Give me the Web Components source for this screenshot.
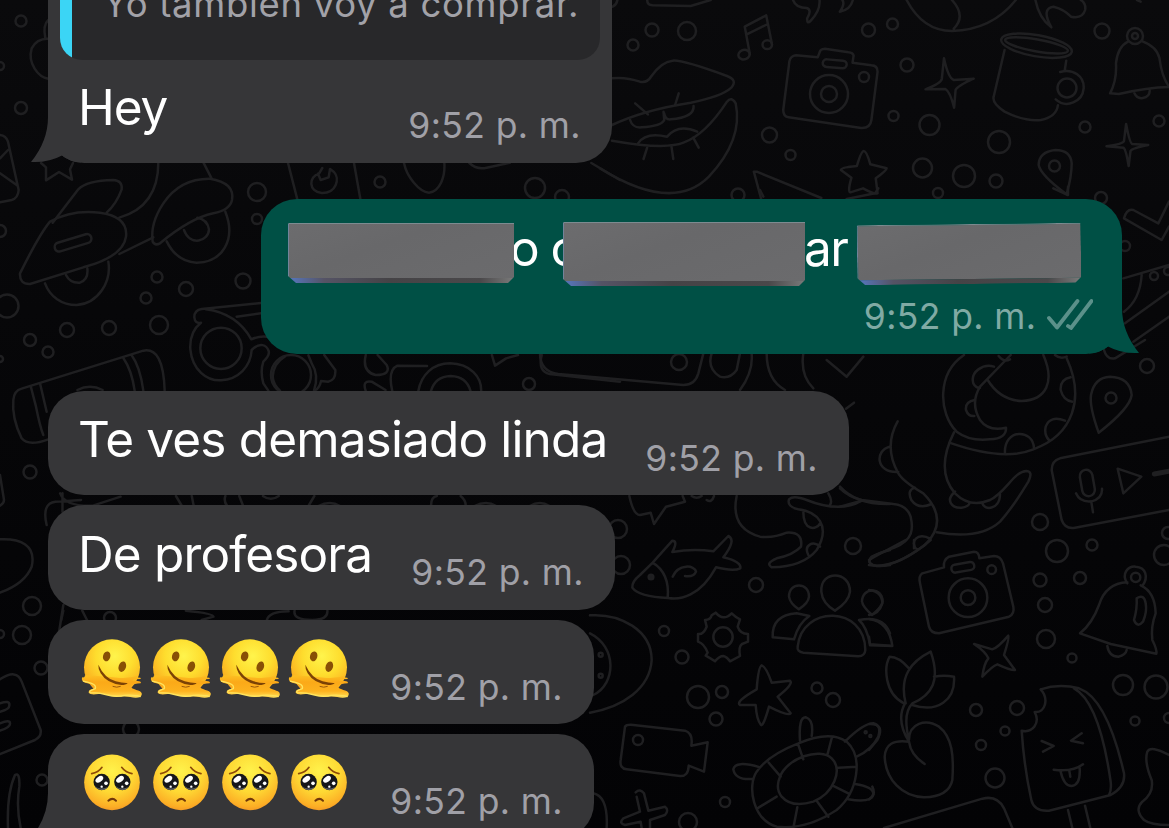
<!DOCTYPE html>
<html lang="es">
<head>
<meta charset="utf-8">
<title>Chat</title>
<style>
  html, body {
    margin: 0;
    height: 100%;
    overflow: hidden;
    background: #050507;
  }
</style>
</head>
<body>
<chat-screen>
  <chat-message tail style="--w: 564px; --h: 162.5px">
    <chat-quote slot="quote">Yo también voy a comprar.</chat-quote>
    <span style="letter-spacing: -1.1px">Hey</span>
    <message-time slot="time">9:52 p. m.</message-time>
  </chat-message>
  <chat-message out tail style="--w: 861px; --h: 155.5px; margin: 26.3px 0">
    <redacted-text>
      <redaction-bar style="--w: 226px; --h: 60px; --y: 5px"></redaction-bar>
      <span class="mid">o c</span>
      <redaction-bar style="--w: 242px; --h: 64px; --y: 4px"></redaction-bar>
      <span class="end">ar</span>
      <redaction-bar style="--w: 224px; --h: 60px; --y: 6px; --tilt: -.7deg"></redaction-bar>
    </redacted-text>
    <message-time slot="time" read>9:52 p. m.</message-time>
  </chat-message>
  <chat-message style="--w: 801px">
    <span>Te ves demasiado linda</span>
    <message-time slot="time">9:52 p. m.</message-time>
  </chat-message>
  <chat-message style="--w: 567px">
    <span>De profesora</span>
    <message-time slot="time">9:52 p. m.</message-time>
  </chat-message>
  <chat-message style="--w: 546px">
    <emoji-row kind="melting" count="4"></emoji-row>
    <message-time slot="time">9:52 p. m.</message-time>
  </chat-message>
  <chat-message tail style="--w: 546px">
    <emoji-row kind="pleading" count="4"></emoji-row>
    <message-time slot="time">9:52 p. m.</message-time>
  </chat-message>
</chat-screen>

<template id="wallpaper">
  <style>
    :host { display: block; }
    svg { display: block; width: 1169px; height: 828px; }
    path, circle, ellipse, rect {
      fill: none;
      stroke: #1f1f21;
      stroke-width: 2.5px;
      stroke-linecap: round;
      stroke-linejoin: round;
      vector-effect: non-scaling-stroke;
    }
  </style>
  <svg viewBox="0 0 1169 828" aria-hidden="true">
    <g id="dots"></g>
    <!-- top right: lips, notes, camera, mug, bell -->
    <g transform="scale(.36284 .33333) translate(1653.6 0)">
      <path d="M33 235Q70 230 110 245Q130 250 142 228Q170 185 200 182Q225 178 350 228Q380 240 362 263Q335 290 250 308Q120 330 33 375"/>
      <path d="M33 422Q180 450 230 428Q290 405 350 305Q362 288 374 310Q395 420 300 530Q200 640 0 505"/>
      <path d="M97 310L132 343M217 280L207 315M83 360Q90 385 115 382Q170 378 177 360L175 335M177 340Q180 360 195 358Q260 352 258 318M105 430Q125 395 185 410Q215 370 268 395M130 443L120 477M197 440L202 477M257 413L272 443"/>
      <path d="M413 163L399 80L458 46L474 133M403 104L463 72"/>
      <ellipse cx="397" cy="164" rx="16" ry="14" transform="rotate(-25 397 164)"/>
      <ellipse cx="461" cy="134" rx="13" ry="13"/>
      <path d="M130 0Q130 15 145 16L250 18L305 0M35 20Q46 14 48 0M532 0Q540 24 570 24Q585 30 571 55Q570 74 580 63Q608 32 605 0M668 0Q676 12 661 35Q690 30 697 0M845 0Q890 93 970 93Q1080 90 1146 0M970 0Q1010 48 975 86M1200 0Q1210 55 1244 82Q1215 25 1250 20Q1280 28 1298 50Q1330 57 1337 30Q1340 10 1325 0M1480 0L1490 5"/>
      <path d="M600 172L540 166Q525 168 522 184L505 330Q505 350 520 352L720 384Q745 385 748 360L765 215Q765 197 748 196L696 188L699 167Q697 158 685 157L620 146Q606 147 605 158Z"/>
      <rect x="614" y="180" width="66" height="23" rx="11" transform="rotate(5 647 191)"/>
      <path d="M948 175Q960 235 975 240L1030 236Q985 258 980 270L976 323Q965 275 952 267L897 268Q940 250 942 237Z"/>
      <ellipse cx="1203" cy="137" rx="99" ry="32" transform="rotate(11 1203 137)"/>
      <ellipse cx="1203" cy="136" rx="88" ry="18" transform="rotate(11 1203 136)"/>
      <path d="M1115 150L1085 290Q1080 310 1115 335Q1170 365 1215 360Q1258 350 1262 316M1285 182L1281 210M1268 216C1305 204 1335 230 1333 265C1330 305 1285 327 1256 298"/>
      <path d="M1455 125Q1427 140 1422 190Q1425 240 1406 280L1430 282Q1510 262 1569 261Q1548 230 1542 175Q1535 140 1495 124M1473 280Q1480 297 1496 294Q1515 290 1515 272"/>
      <path d="M1450 372Q1460 430 1467 432L1511 435Q1465 445 1462 453L1457 498Q1450 450 1443 443L1396 439Q1440 432 1444 424Z"/>
      <path d="M1286 583Q1300 530 1300 490Q1297 450 1255 450Q1210 455 1209 495Q1214 525 1286 583Z"/>
      <path d="M727 453Q735 453 745 493L790 505Q790 512 760 535L765 580Q755 583 725 565L690 577Q682 575 693 533L664 510Q664 502 708 498Q720 453 727 453Z"/>
      <path d="M445 600L424 515L432 515L610 594"/>
    </g>
    <!-- top left -->
    <g transform="scale(.33333)">
      <path d="M145 60Q128 75 136 115M145 116Q110 115 95 145C82 190 115 232 145 236"/>
      <path d="M0 405Q18 407 24 425L56 570Q54 595 35 600L0 607M24 450L0 475M0 520L50 555"/>
      <path d="M123 489L138 502L138 541L177 516L216 539L210 508L219 489"/>
      <path d="M864 489L893 602M1062 489L1082 602M967 504L957 521C925 530 925 575 965 579C1010 580 1020 535 1002 516L990 507L986 532L962 540L954 521"/>
      <path d="M1212 489C1220 530 1258 576 1287 578C1320 574 1336 530 1333 489M1408 489Q1430 510 1460 503L1530 488M1774 489L1860 540"/>
    </g>
    <!-- scooter, glasses, cash -->
    <g transform="scale(.33333) translate(0 450)">
      <path d="M60 370Q120 250 150 215Q215 178 300 188Q385 200 378 260Q370 320 250 352L90 402Q58 403 60 370Z"/>
      <path d="M158 218L235 118Q260 92 340 90Q368 92 365 118Q350 160 320 188M475 37Q475 170 358 203M610 37L635 86M358 312L460 262"/>
      <path d="M458 275Q450 220 490 160Q540 85 630 86Q705 98 696 150Q690 180 640 190Q570 205 480 280Q465 288 458 275Z"/>
      <path d="M676 185C710 270 665 338 590 338Q530 335 500 274M552 240C570 290 626 275 627 238Q622 208 592 203M135 400C150 440 185 465 230 465C295 460 335 395 325 335M198 375Q210 400 240 398Q266 388 262 355"/>
      <rect x="162" y="265" width="114" height="27" rx="13" transform="rotate(-17 219 278)"/>
      <path d="M783 459L605 477Q583 480 583 502Q585 522 603 518Q568 545 571 598C577 660 620 693 663 691C715 688 752 650 755 600C780 575 800 585 806 603Q810 615 790 635Q780 665 790 700L805 722M618 478Q710 490 754 568Q775 558 800 560M710 500L783 490"/>
      <circle cx="663" cy="595" r="62"/>
      <path d="M855 619Q820 640 818 680Q820 705 840 722M942 722Q958 675 935 640L925 616"/>
      <path d="M40 750Q42 722 65 716L430 602Q490 590 494 722M370 624Q395 660 404 722M395 616Q420 650 430 722M92 708L108 770Q120 830 130 855M120 700L140 785M232 720Q270 700 308 720M40 750Q35 805 65 865Q85 890 145 868"/>
    </g>
    <!-- strip between the bubbles -->
    <g transform="translate(0 340) scale(.3954 .33333)">
      <path d="M820 45L848 90Q850 120 830 125L812 123Q808 145 795 153M925 45Q915 95 950 105Q990 105 978 75L955 45M925 153Q915 120 940 125L975 150M992 153Q980 90 1005 77L1080 78M1058 153C1065 105 1095 70 1138 70C1190 72 1218 110 1217 153M1090 153Q1100 110 1140 108Q1180 110 1190 153M1244 45L1252 77L1280 55L1310 45M1370 45Q1360 95 1390 102L1568 125"/>
      <path d="M152 460Q165 500 235 497L305 470M118 555Q105 490 140 485L205 480M158 460V515M155 840L160 812M208 812L220 840M445 468L460 498M485 468L490 498M570 468Q565 485 575 498M605 468L615 498M665 468Q685 485 705 468M795 468L780 498M1090 498Q1090 470 1105 468M1165 468Q1178 480 1178 498M470 812Q540 820 540 830L510 840M675 840Q680 815 730 814M745 812Q740 840 790 840Q830 840 828 812"/>
      <path d="M805 498Q835 480 860 498M1200 498Q1230 480 1255 498M1340 498Q1365 480 1390 498"/>
    </g>
    <!-- between sent bubble and the voice note: laptop, snake -->
    <g transform="translate(540 350) scale(.33333)">
      <path d="M0 10Q0 65 55 72L430 105Q465 105 475 70L490 10M515 10Q500 55 540 80Q570 88 590 60L600 10M635 12Q640 65 600 120M680 10Q680 90 735 120M790 10Q780 75 820 115M860 30L920 80L970 20"/>
    </g>
    <g transform="translate(840 340) scale(.33333)">
      <path d="M372 45C290 100 295 220 350 275Q390 305 450 298Q500 295 498 263Q445 275 420 240Q390 190 420 140L512 45M443 120Q480 180 545 183C620 180 645 125 610 45M680 55C735 175 700 285 580 328Q490 365 328 308M342 277Q285 390 345 460Q390 505 450 480C500 455 520 395 560 393Q580 395 565 425Q520 500 480 545Q420 600 290 577"/>
      <path d="M462 80C430 70 390 95 400 130Q408 145 420 143M404 180Q375 185 378 210Q385 230 403 228M692 112Q660 118 662 150Q670 182 697 185M675 242Q630 225 617 260Q612 285 627 300M495 340C490 265 580 265 582 325M476 48Q492 68 510 58M645 45Q660 58 680 50M345 455C315 480 335 505 365 503Q387 500 389 488M427 488C430 512 480 512 480 462"/>
      <path d="M173 244Q130 320 175 400Q190 425 250 460Q330 540 255 615Q165 680 110 678Q75 670 95 650Q130 635 165 622C220 600 220 565 212 530Q200 495 160 492L65 480Q25 470 0 445M0 500L65 482M149 320C105 330 105 400 175 396M225 443Q200 450 214 480Q235 510 275 492M232 630C205 605 235 575 270 596M18 206L42 188"/>
      <path d="M776 278Q748 200 753 165Q763 112 810 110Q870 112 875 165Q870 205 776 278Z"/>
      <path d="M987 290L660 355Q635 362 635 390L665 540Q675 568 705 563L987 510M833 386L904 410L850 460Z"/>
      <rect x="723" y="389" width="38" height="80" rx="19" transform="rotate(-10 742 429)"/>
      <path d="M708 460Q720 488 755 484Q788 475 786 446M754 486L759 517"/>
      <path d="M943 402L987 394" style="stroke-width: 5px"/>
      <path d="M792 30Q800 60 825 55L915 0"/>
    </g>
    <g transform="translate(700 190) scale(.33333)">
      <path d="M1407 35L1375 100L1300 60Q1280 55 1272 85L1385 150L1407 110M1270 265L1407 225M1325 255Q1320 330 1272 365M1275 400L1407 305M1300 455L1407 380M440 27L525 10L535 -5M1060 -5L1104 15V-10M180 0L190 20"/>
    </g>
    <!-- fish, gear, people, starfish, turtle, camcorder -->
    <g transform="translate(590 480) scale(.33333)">
      <path d="M118 48Q130 105 150 105L182 98L192 132L228 80L285 65L278 48M305 48Q320 58 335 48M350 60Q365 70 372 48M440 48Q420 145 510 170Q550 175 590 158Q640 155 633 200Q610 225 560 235Q525 250 545 262Q640 260 680 210C725 135 680 95 625 88Q590 80 597 58Q610 45 650 60Q750 100 815 62M715 40Q730 65 718 78M750 20Q800 75 900 72M640 95C640 155 680 150 690 130M655 225C640 195 670 180 690 200M900 210Q840 225 838 245Q845 265 900 255"/>
      <path d="M247 216Q310 205 370 214L415 168Q440 180 400 232Q455 245 451 265Q430 275 378 262C330 350 270 360 235 354Q145 350 127 323Q125 305 150 285L188 248L247 182Q265 182 247 216M188 248Q240 280 233 354M248 290C265 250 315 255 318 275Q310 292 285 288"/>
      <circle cx="183" cy="291" r="7" style="fill:#1f1f21"/>
      <path d="M377 398L365 406Q362 420 345 420L350 440Q340 465 324 462V485Q342 490 353 518L347 527Q360 534 375 544Q388 528 400 528Q410 530 420 544L450 528Q445 500 456 492L474 485V462Q450 462 443 440L450 418Q435 410 425 400Q400 425 377 398Z"/>
      <circle cx="399" cy="471" r="29"/>
      <path d="M597 350C597 305 657 305 657 350Q655 370 626 388Q600 370 597 350M694 335C690 270 780 270 780 335Q777 365 735 392Q697 370 694 335M816 365C816 320 878 320 878 365Q876 380 846 405Q818 380 816 365M612 478L548 472Q545 405 620 400L658 408Q625 430 612 478ZM623 500C635 375 825 375 826 510Q825 528 805 529L640 518Q620 515 623 500M807 420Q880 405 900 460M807 420Q830 440 840 493L900 497"/>
      <path d="M515 556Q528 560 545 608L600 602Q612 612 563 650L602 700Q595 710 537 680Q520 740 513 735Q500 720 497 675L450 675Q435 665 500 628Q505 560 515 556Z"/>
      <path d="M105 740Q110 733 130 735L285 752Q310 760 304 797L353 787L342 875L296 857Q295 890 270 888L110 868Q88 865 92 840Z"/>
      <path d="M625 790Q720 750 770 785C820 830 805 935 740 990Q650 1050 560 1040C490 1020 470 920 500 875Q535 825 625 790ZM570 890C590 835 690 800 725 835C760 870 730 940 670 965Q605 985 575 950Q555 925 570 890M624 792L640 838M726 771L712 825M536 848L572 890M746 863L800 860M560 950L502 985M622 982L610 1044M682 965L715 1010M730 918L775 940M630 782Q625 710 648 712Q672 720 665 768M765 785Q820 730 850 730Q875 735 865 770Q845 810 800 830M510 862Q435 840 430 868Q435 900 485 897M795 912Q850 920 850 942Q845 970 775 958"/>
      <circle cx="827" cy="757" r="3"/><circle cx="841" cy="768" r="3"/>
      <path d="M0 406C90 400 185 450 185 540C180 625 100 680 0 698M0 460C80 500 80 610 10 645M10 940Q55 950 50 1044M137 937Q150 925 162 940L175 992L225 980Q238 990 225 1005L180 1020V1044M140 950L150 995L100 1015Q85 1030 105 1035L152 1025L155 1044"/>
      <circle cx="32" cy="524" r="6"/><circle cx="32" cy="587" r="6"/>
    </g>
    <!-- bottom right: camera, bell, plant, ice cream -->
    <g transform="translate(869 540) scale(.33333)">
      <path d="M225 82L160 100Q148 108 153 130L180 260Q185 280 210 280L420 230Q437 222 433 200L402 70Q395 48 375 48L331 55Q330 35 315 35L240 50Q222 60 225 82Z"/>
      <rect x="247" y="70" width="69" height="24" rx="11" transform="rotate(-10 281 82)"/>
      <circle cx="297" cy="173" r="58"/><circle cx="297" cy="173" r="22"/><circle cx="368" cy="89" r="13"/>
      <path d="M315 312L370 328Q385 325 418 287Q422 290 405 345L438 390Q430 393 385 373Q370 378 340 410Q345 370 358 355Q350 335 315 312Z"/>
      <path d="M775 127Q710 130 690 195Q670 250 633 280L725 312L862 341Q865 330 850 300Q845 260 860 220Q858 155 815 136M775 130C755 100 778 78 800 80C830 82 840 110 820 138M715 318Q720 350 748 350Q770 345 773 330"/>
      <circle cx="800" cy="112" r="14"/>
      <path d="M803 175Q825 160 830 190Q835 215 822 245Q805 265 795 240Q805 205 803 175Z"/>
      <path d="M105 490C45 460 45 380 62 350Q90 350 120 385M110 490C90 410 125 365 185 335C215 420 190 465 130 490M195 410Q225 405 255 410C260 480 205 520 130 495M108 490Q80 540 120 605Q125 645 167 672M130 490Q100 520 120 600C120 550 170 535 210 560C250 590 255 650 250 720Q240 770 165 772C100 770 50 720 47 650Q50 595 120 605"/>
      <path d="M515 448Q570 430 630 445C700 470 740 590 765 700Q770 740 725 765L540 812Q495 815 487 780Q465 680 458 572C490 580 515 550 497 516C530 520 540 475 515 448M615 445C680 480 710 620 725 725Q728 750 720 765M597 810L610 864M648 797L664 864"/>
      <path d="M518 603L554 618L522 635M638 580L606 602L642 610M554 689Q610 697 642 673M575 695Q585 738 608 738Q635 735 632 685M601 693L604 710"/>
      <path d="M900 645Q845 615 835 635Q825 665 848 720Q855 760 820 785Q795 810 825 840Q845 855 900 855M45 864L340 776Q385 765 405 805L430 864M0 150Q40 155 40 190Q30 222 0 225M0 237Q60 245 70 318L3 316L0 290M0 552Q50 550 25 600L0 630M10 740Q22 765 0 778M0 60Q35 40 110 0M0 75Q80 90 185 0M135 0V25"/>
    </g>
    <!-- left edge -->
    <g transform="translate(0 440) scale(.33333)">
      <path d="M0 105L12 180Q12 190 0 197M0 298C60 295 110 315 95 380Q75 430 0 458M0 718Q50 685 65 725L122 870Q125 890 105 900L0 942M0 790Q30 780 28 795Q30 808 0 815M0 850Q30 838 30 850Q32 862 0 872M24 1164Q20 1060 45 1005Q60 995 58 1040Q48 1100 62 1164M190 495L178 570"/>
    </g>
  </svg>
</template>

<template id="melting">
  <svg viewBox="120 80 207 200">
    <defs>
      <radialGradient id="g" cx=".55" cy=".3" r=".75">
        <stop offset="0" stop-color="#fff44c"/><stop offset=".45" stop-color="#fedd2e"/>
        <stop offset=".85" stop-color="#fbb020"/><stop offset="1" stop-color="#ee9326"/>
      </radialGradient>
      <linearGradient id="p" x2="0" y2="1">
        <stop offset="0" stop-color="#fdc022"/><stop offset=".3" stop-color="#fba918"/>
        <stop offset=".7" stop-color="#fdb21e"/><stop offset="1" stop-color="#ffe05a"/>
      </linearGradient>
    </defs>
    <circle cx="216" cy="174" r="84" fill="url(#g)"/>
    <path d="M135 198Q134 207 128 203Q122 210 130 217C145 226 166 222 163 234C160 242 145 239 146 250Q151 258 175 254C205 252 215 264 245 262C270 260 285 270 302 262Q310 253 300 246C285 238 270 239 274 229Q282 223 302 222Q306 216 292 215L276 213Q281 209 302 209Q304 204 290 205L296 198Q270 208 240 206Q180 200 135 198Z" fill="url(#p)"/>
    <path d="M130 215C152 222 170 223 166 238C152 243 147 245 150 250Q178 250 203 257T253 258Q285 256 300 262" fill="none" stroke="#ffe45d" stroke-width="4" stroke-linecap="round"/>
    <ellipse cx="200" cy="141" rx="11" ry="15" transform="rotate(15 200 141)" fill="#885006"/>
    <ellipse cx="247" cy="172" rx="11" ry="16" transform="rotate(18 247 172)" fill="#885006"/>
    <path d="M175 166Q193 206 227 216Q249 222 263 221Q258 227 244 227Q200 222 182 192Q174 178 175 166Z" fill="#7b4205"/>
    <path d="M218 231Q230 236 242 231" fill="none" stroke="#9b5a0b" stroke-width="3"/>
  </svg>
</template>

<template id="pleading">
  <svg viewBox="120 422 207 200">
    <defs>
      <radialGradient id="g" cx=".5" cy=".3" r=".75">
        <stop offset="0" stop-color="#fff24b"/><stop offset=".5" stop-color="#fed934"/>
        <stop offset=".85" stop-color="#fcae25"/><stop offset="1" stop-color="#ee8e25"/>
      </radialGradient>
    </defs>
    <circle cx="216" cy="516" r="83.5" fill="url(#g)"/>
    <path d="M155 490Q175 487 186 471M245 471Q257 487 276 490" fill="none" stroke="#8d4a08" stroke-width="5" stroke-linecap="round"/>
    <g id="eye">
      <circle cx="185" cy="515" r="24.5" fill="#15161a"/>
      <path d="M165 527Q179 541 203 530Q198 539 185 539Q171 537 165 527Z" fill="#5e6066"/>
      <ellipse cx="178" cy="507" rx="13" ry="8" transform="rotate(-35 178 507)" fill="#fff"/>
      <circle cx="198" cy="519" r="5.5" fill="#fff"/><circle cx="185" cy="529" r="3.5" fill="#fff"/>
    </g>
    <use href="#eye" x="62"/>
    <path d="M205 571Q217 560 228 571" fill="none" stroke="#70370a" stroke-width="6" stroke-linecap="round"/>
  </svg>
</template>

<script>
  // x y r, in page pixels
  const DOTS = `
    652 30 6.5, 633 45 5.5, 687 31 9, 868.5 30 6.5, 892.5 24 5.5, 907 65 6.5, 893.5 116 5,
    929.5 125 10, 769.5 135 7.5, 790.5 155 5, 922.5 168 9.5, 964 176 11, 996 181 6.5, 938 193 5,
    999 142 11, 1085 127 5.5, 1102 31 7.5, 1159 121 5.5, 738 195 6.5, 1101 198 6, 829 94 19,
    829 94 8, 864 77 5, 1067 88 9.5, 1135 36 8, 1135 36 3, 1054.5 166 5.5,
    21 21 5.5, 0 66 4, 21 108 6, 257 192 9, 257 219 5, 0 231 6, 380 182 5.5, 535 188 10, 562 197 7,
    157 277 5.5, 186 289 7, 243 281 7.5, 146 298 5.5, 159 325 9, 109 328 7, 67 330 7, 30 340 6,
    48 352 5.5, 7 306 11.5, 0 359 3, 291 375 20, 529 384 6, 30 472 6.5, 32 606 9, 22 635 9,
    0 634 4, 41 668 6.5, 42 780 5.5, 679 362 8, 1125 246 5, 1154 276 4, 1168 271 4,
    1147 366 7, 1111 398 5.5, 1040 522 8, 1057 551 11, 1092 545 5.5, 853 546 8, 1164 555 10,
    1168 533 6, 618 529 9, 621 565 9, 756 585 7, 664 631 5, 682 657 6.5, 698 697 11, 722 692 6,
    716 719 6.5, 817 688 5.5, 833 700 7, 638 740 5, 725 802 5, 688 822 9, 1040 580 6.5, 1080 578 6,
    1045 605 7, 1046 639 9, 1072 658 4.5, 1123 685 10, 1156 687 11.5, 1135 721 4.5, 1169 718 5,
    976 710 6, 1017 708 7, 1005 731 4.5, 981 745 5, 995 778 9.5, 110 618 6, 131 729 8`;

  const FONT = '"Inter", "Liberation Sans", sans-serif';

  customElements.define('chat-wallpaper', class extends HTMLElement {
    constructor() {
      super();
      const root = this.attachShadow({ mode: 'open' });
      root.append(document.getElementById('wallpaper').content.cloneNode(true));
      root.getElementById('dots').innerHTML = DOTS.split(',').map(d => {
        const [x, y, r] = d.trim().split(' ');
        return `<circle cx="${x}" cy="${y}" r="${r}"/>`;
      }).join('');
    }
  });

  customElements.define('chat-screen', class extends HTMLElement {
    constructor() {
      super();
      this.attachShadow({ mode: 'open' }).innerHTML = `
        <style>
          :host {
            display: block;
            position: relative;
            width: 1169px;
            height: 828px;
            overflow: hidden;
            background: linear-gradient(#0a0a0c, #060608 50%, #030305);
            font-family: ${FONT};
          }
          chat-wallpaper { position: absolute; inset: 0; }
          main {
            position: relative;
            display: flex;
            flex-direction: column;
            align-items: flex-start;
            gap: 10.2px;
            padding: 0 47px 0 48px;
          }
        </style>
        <chat-wallpaper></chat-wallpaper>
        <main><slot></slot></main>
      `;
    }
  });

  customElements.define('chat-message', class extends HTMLElement {
    constructor() {
      super();
      const tail = this.hasAttribute('tail') ? `
        <svg class="tail" viewBox="0 0 50 46" aria-hidden="true">
          <path d="M17 0Q17 24 0 45Q17 46 31 38.5Q39 45 50 45.5V0Z"/>
        </svg>` : '';
      this.attachShadow({ mode: 'open' }).innerHTML = `
        <style>
          :host {
            display: flex;
            position: relative;
            flex: none;
            flex-direction: column;
            justify-content: flex-end;
            box-sizing: border-box;
            width: var(--w);
            height: var(--h, 104.3px);
            border-radius: 36px;
            background: var(--fill);
            color: #fff;
            font-size: 49.5px;
            line-height: 60px;
            letter-spacing: -0.85px;
            white-space: nowrap;
            --fill: #363638;
            --time: #a0a0a7;
          }
          :host([out]) {
            align-self: flex-end;
            --fill: #005045;
            --time: #80aaa4;
          }
          :host(:first-child) { border-radius: 0 0 36px 36px; }
          .row {
            display: flex;
            flex: 1;
            justify-content: space-between;
            padding: 18.5px 31px 15.5px 30px;
          }
          :host(:first-child) .row {
            flex: none;
            box-sizing: border-box;
            height: 102.5px;
            padding-top: 17px;
          }
          :host([out]) .row {
            flex-direction: column;
            padding: 19px 28px 16px 27px;
          }
          slot[name=time]::slotted(*) { align-self: flex-end; }
          .tail {
            position: absolute;
            left: -17px;
            bottom: 0;
            width: 50px;
            height: 46px;
            fill: var(--fill);
          }
          :host([out]) .tail { left: auto; right: -17px; transform: scaleX(-1); }
        </style>
        ${tail}
        <slot name="quote"></slot>
        <div class="row"><slot></slot><slot name="time"></slot></div>
      `;
    }
  });

  customElements.define('chat-quote', class extends HTMLElement {
    constructor() {
      super();
      this.attachShadow({ mode: 'open' }).innerHTML = `
        <style>
          :host {
            display: flex;
            flex: none;
            align-items: flex-end;
            box-sizing: border-box;
            height: 90px;
            margin: 0 12px;
            padding: 0 0 28px 43px;
            border-radius: 0 0 22px 22px;
            background: linear-gradient(90deg, #3bd5f5 12px, #28282a 12px);
            color: #a2a2a8;
            font-size: 36.5px;
            line-height: 56px;
            letter-spacing: .7px;
          }
        </style>
        <slot></slot>
      `;
    }
  });

  customElements.define('message-time', class extends HTMLElement {
    constructor() {
      super();
      const ticks = this.hasAttribute('read') ? `
        <svg viewBox="0 0 46 32" aria-hidden="true">
          <path d="M2 19L10 28.5L30.5 2M21 27L24 29L44.5 2"/>
        </svg>` : '';
      this.attachShadow({ mode: 'open' }).innerHTML = `
        <style>
          :host {
            display: flex;
            align-items: center;
            color: var(--time);
            font-size: 35.5px;
            line-height: 43px;
            letter-spacing: .4px;
          }
          svg {
            width: 46px;
            height: 32px;
            margin: -3px 1.5px 0 10px;
            fill: none;
            stroke: #5b918a;
            stroke-width: 3.8;
            stroke-linecap: round;
            stroke-linejoin: round;
          }
        </style>
        <slot></slot>${ticks}
      `;
    }
  });

  customElements.define('redacted-text', class extends HTMLElement {
    constructor() {
      super();
      this.attachShadow({ mode: 'open' }).innerHTML = `
        <style>
          :host { display: flex; height: 60px; }
          ::slotted(span) { letter-spacing: -1.6px; }
          ::slotted(.mid) { width: 49px; overflow: hidden; text-indent: -4px; }
          ::slotted(.end) { width: 53px; text-indent: -1px; margin-right: -1px; }
        </style>
        <slot></slot>
      `;
    }
  });

  customElements.define('redaction-bar', class extends HTMLElement {
    constructor() {
      super();
      this.attachShadow({ mode: 'open' }).innerHTML = `
        <style>
          :host {
            display: flex;
            flex: none;
            flex-direction: column;
            width: var(--w);
            height: var(--h);
            margin-top: var(--y);
            transform: rotate(var(--tilt, 0deg));
            clip-path: polygon(0 1px, 1px 0, 100% 0, 100% calc(100% - 6px), calc(100% - 6px) 100%, 8px 100%, 0 calc(100% - 7px));
          }
          .face {
            flex: 1;
            box-sizing: border-box;
            border-top: 1px solid #7c8b90;
            border-left: 1px solid #72839a;
            background: linear-gradient(160deg, #6c6c6e, #68686a 40%, #6b6b6d);
          }
          .edge {
            height: 5px;
            background: linear-gradient(90deg, #5671b0 3%, #555365 16%, #454346 45%, #4a484a 85%, #777 99%);
          }
        </style>
        <div class="face"></div>
        <div class="edge"></div>
      `;
    }
  });

  customElements.define('emoji-row', class extends HTMLElement {
    constructor() {
      super();
      const root = this.attachShadow({ mode: 'open' });
      root.innerHTML = `
        <style>
          :host { display: flex; margin: -2.3px 0 0 2px; }
          svg { display: block; width: 69px; height: 66.7px; }
        </style>
      `;
      const face = document.getElementById(this.getAttribute('kind'));
      for (let i = 0; i < Number(this.getAttribute('count')); i++) {
        root.append(face.content.cloneNode(true));
      }
    }
  });
</script>
</body>
</html>
